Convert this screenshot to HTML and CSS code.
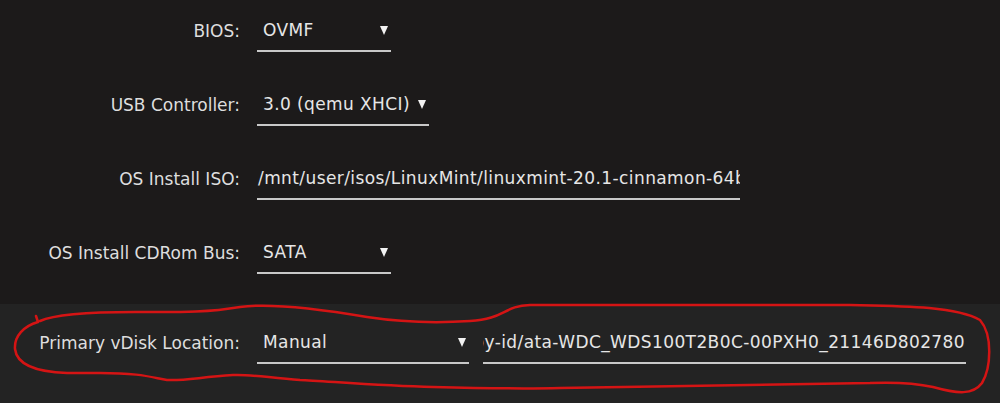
FILE: index.html
```html
<!DOCTYPE html>
<html lang="en">
  <head>
    <meta charset="UTF-8" />
    <meta name="viewport" content="width=device-width, initial-scale=1.0" />
    <title>VM Settings</title>
    <link rel="stylesheet" href="styles.css">
  </head>
  <body>
    <div class="page">
      <div class="form">
        <div class="row">
          <span class="label">BIOS:</span>
          <div class="field select w-bios">
            <span>OVMF</span>
            <svg class="arrow" width="8" height="9" viewBox="0 0 8 9"><polygon points="0,0 8,0 4,9" /></svg>
          </div>
        </div>

        <div class="row">
          <span class="label">USB Controller:</span>
          <div class="field select w-usb">
            <span>3.0 (qemu XHCI)</span>
            <svg class="arrow" width="8" height="9" viewBox="0 0 8 9"><polygon points="0,0 8,0 4,9" /></svg>
          </div>
        </div>

        <div class="row">
          <span class="label">OS Install ISO:</span>
          <div class="field text w-path">
            <span>/mnt/user/isos/LinuxMint/linuxmint-20.1-cinnamon-64bit.iso</span>
          </div>
        </div>

        <div class="row">
          <span class="label">OS Install CDRom Bus:</span>
          <div class="field select w-bios">
            <span>SATA</span>
            <svg class="arrow" width="8" height="9" viewBox="0 0 8 9"><polygon points="0,0 8,0 4,9" /></svg>
          </div>
        </div>
      </div>

      <div class="band">
        <div class="row">
          <span class="label">Primary vDisk Location:</span>
          <div class="field select w-manual">
            <span>Manual</span>
            <svg class="arrow" width="8" height="9" viewBox="0 0 8 9"><polygon points="0,0 8,0 4,9" /></svg>
          </div>
          <div class="field text w-path scrolled">
            <span>/dev/disk/by-id/ata-WDC_WDS100T2B0C-00PXH0_21146D802780</span>
          </div>
        </div>
      </div>

      <!-- red marker circle drawn over the last row -->
      <svg class="scribble" width="1000" height="403" viewBox="0 0 1000 403">
        <path d="M 40 321 C 55 314, 90 312, 135 312 C 175 312, 205 313, 240 307 C 270 303, 320 309, 367 317 C 400 322, 440 323, 470 321 C 505 319, 503 306, 530 305 L 850 305 C 900 306, 955 306, 980 320 C 993 335, 991 368, 982 383 C 973 395, 958 394, 933 387 C 915 383, 895 382, 870 383 L 560 388 C 520 389, 470 388, 433 387 C 380 386, 325 381, 300 380 C 270 378, 250 374, 233 375 C 200 377, 185 381, 167 380 C 150 377, 140 373, 100 373 L 67 373 C 38 372, 17 366, 15 349 C 14 336, 24 326, 38 322 L 36 316" />
      </svg>
    </div>
  </body>
</html>
```

FILE: styles.css
```css
body {
  margin: 0;
  background: #1c1a1a;
  color: #e6e6e6;
  font-family: "DejaVu Sans", "Open Sans", sans-serif;
  font-size: 17px;
}
.page {
  position: relative;
  width: 1000px;
  height: 403px;
  overflow: hidden;
}
.form {
  display: flex;
  flex-direction: column;
  gap: 32px;
  padding-top: 10px;
}
.row {
  display: flex;
  align-items: center;
  height: 42px;
}
.label {
  width: 240px;
  margin-right: 17px;
  text-align: right;
  white-space: nowrap;
  color: #dedede;
}
.field {
  display: flex;
  align-items: center;
  height: 40px;
  border-bottom: 2px solid #c8c8c8;
  white-space: nowrap;
  overflow: hidden;
  letter-spacing: 0.4px;
}
.field span {
  flex-shrink: 0;
}
.select {
  justify-content: space-between;
  padding: 0 3px 0 6px;
}
.text {
  padding: 0 1px 0 1px;
}
.scrolled {
  justify-content: flex-end;
  margin-left: 14px;
}
.arrow {
  fill: #f2f2f2;
  flex-shrink: 0;
}
.w-bios {
  width: 125px;
}
.w-usb {
  width: 163px;
}
.w-manual {
  width: 203px;
}
.w-path {
  width: 481px;
}
.band {
  margin-top: 30px;
  padding-top: 18px;
  height: 81px;
  background: #232323;
}
.scribble {
  position: absolute;
  top: 0;
  left: 0;
  pointer-events: none;
}
.scribble path {
  fill: none;
  stroke: #d41414;
  stroke-width: 2.5;
  stroke-linecap: round;
  stroke-linejoin: round;
}
```
